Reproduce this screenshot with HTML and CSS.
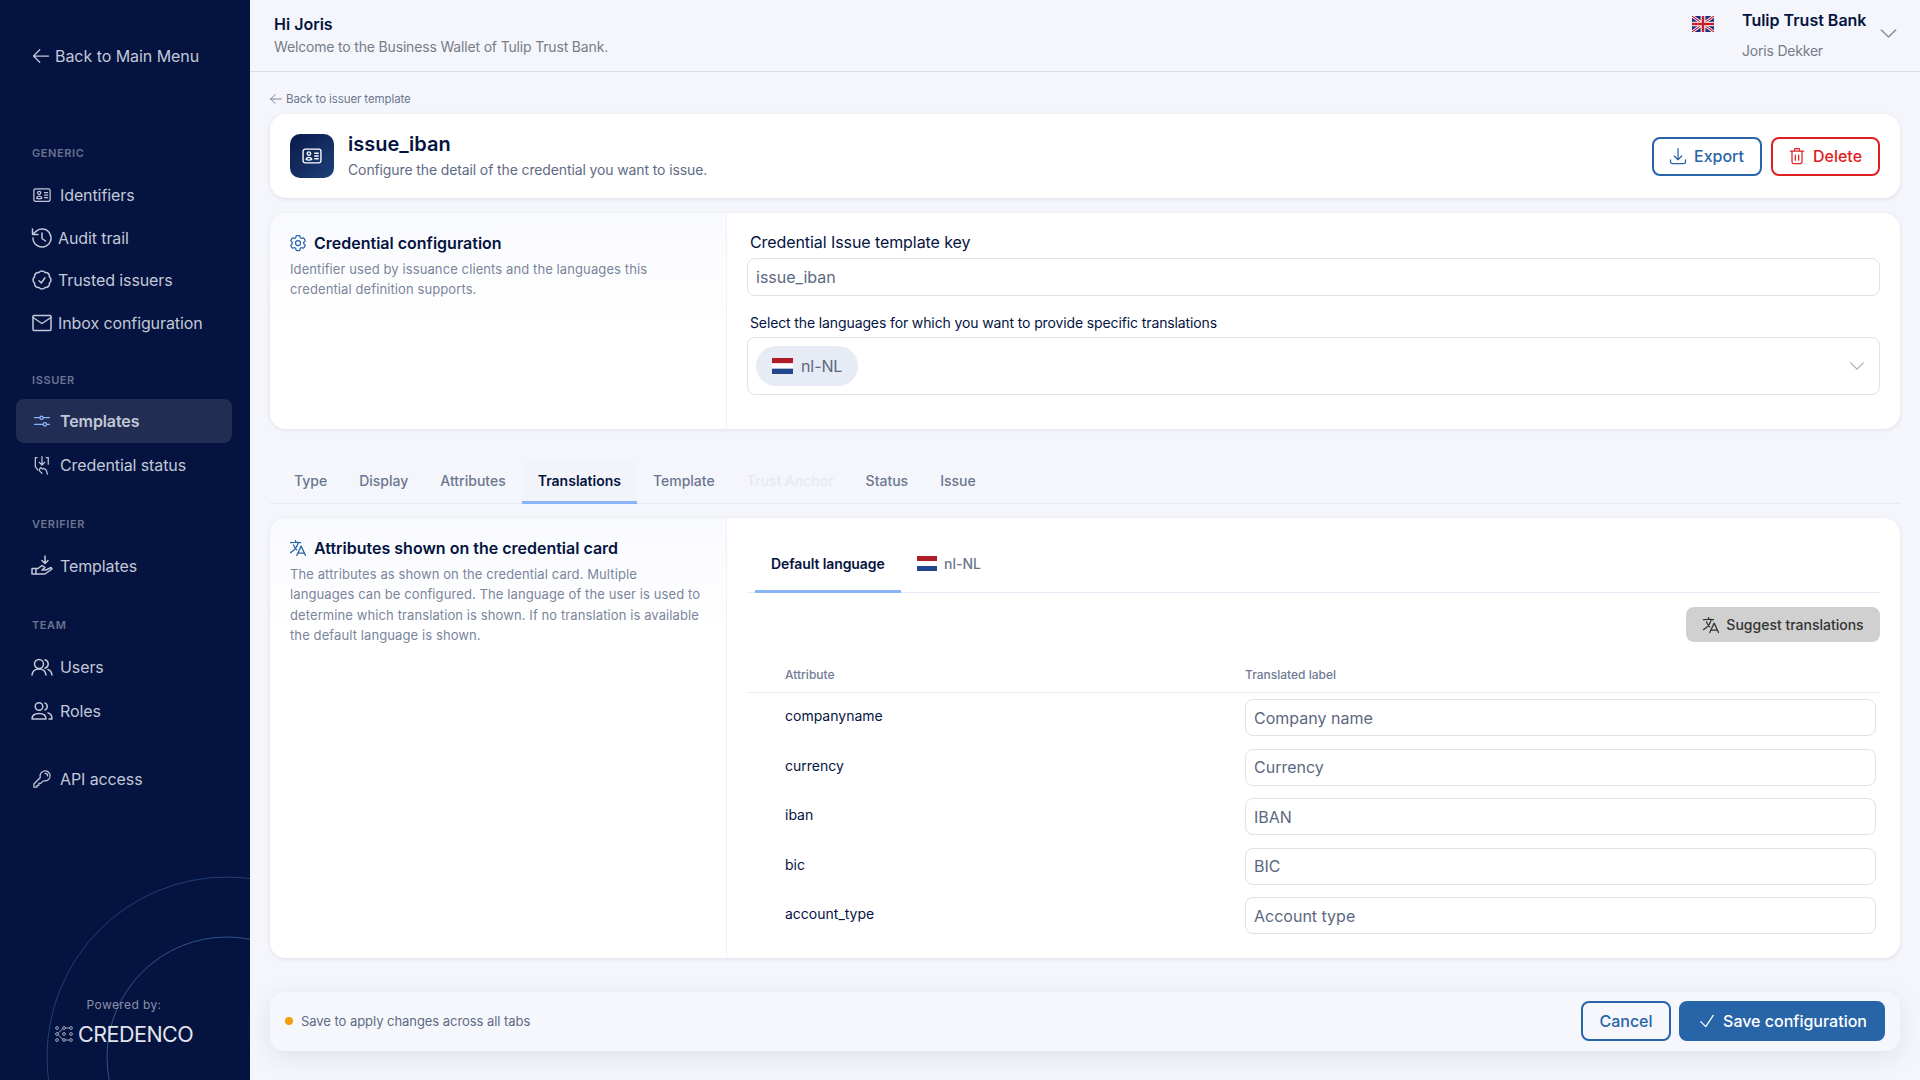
FILE: index.html
```html
<!DOCTYPE html>
<html lang="en">
<head>
    <meta charset="UTF-8">
    <meta name="viewport" content="width=device-width, initial-scale=1.0">
    <title>issue_iban</title>
    <link rel="stylesheet" href="styles.css">
</head>
<body>
    <svg class="sprite" aria-hidden="true">
        <defs>
            <symbol id="i_arrow" viewBox="0 0 24 24"><path d="M10.5 19.5 3 12m0 0 7.5-7.5M3 12h18"/></symbol>
            <symbol id="i_card" viewBox="0 0 24 24"><path d="M15 9h3.75M15 12h3.75M15 15h3.75M4.5 19.5h15a2.25 2.25 0 0 0 2.25-2.25V6.75A2.25 2.25 0 0 0 19.5 4.5h-15a2.25 2.25 0 0 0-2.25 2.25v10.5A2.25 2.25 0 0 0 4.5 19.5Zm6-10.125a1.875 1.875 0 1 1-3.75 0 1.875 1.875 0 0 1 3.75 0Zm1.294 6.336a6.721 6.721 0 0 1-3.17.789 6.721 6.721 0 0 1-3.168-.789 3.376 3.376 0 0 1 6.338 0Z"/></symbol>
            <symbol id="i_lang" viewBox="0 0 24 24"><path d="m10.5 21 5.25-11.25L21 21m-9-3h7.5M3 5.621a48.474 48.474 0 0 1 6-.371m0 0c1.12 0 2.233.038 3.334.114M9 5.25V3m3.334 2.364C11.176 10.658 7.69 15.08 3 17.502m9.334-12.138c.896.061 1.785.147 2.666.257m-4.589 8.495a18.023 18.023 0 0 1-3.827-5.802"/></symbol>
            <symbol id="i_chev" viewBox="0 0 24 24"><path d="m19.5 8.25-7.5 7.5-7.5-7.5"/></symbol>
            <symbol id="f_nl" viewBox="0 0 3 3" preserveAspectRatio="none"><rect width="3" height="1" fill="#ae1c28"/><rect y="1" width="3" height="1" fill="#fff"/><rect y="2" width="3" height="1" fill="#21468b"/></symbol>
        </defs>
    </svg>

    <div class="app">
        <aside class="sidebar">
            <svg class="side_rings" viewBox="0 0 250 210" aria-hidden="true">
                <circle class="ring_out" cx="227" cy="187" r="180"/>
                <circle class="ring_in" cx="227" cy="187" r="120"/>
            </svg>

            <a class="side_back"><svg class="ico ico_20"><use href="#i_arrow"/></svg>Back to Main Menu</a>

            <p class="side_label side_label_first">GENERIC</p>
            <a class="side_item side_item_sm"><svg class="ico ico_20"><use href="#i_card"/></svg>Identifiers</a>
            <a class="side_item side_item_sm side_tight">
                <svg class="ico ico_24" viewBox="0 0 24 24"><path d="M3 12a9 9 0 1 0 2.7-6.4L2.5 8.500M2.500 3v5.500H8M12 7v5.500l3.500 2.500"/></svg>Audit trail
            </a>
            <a class="side_item side_item_sm side_tight">
                <svg class="ico ico_24" viewBox="0 0 24 24"><path d="M9 12.75 11.25 15 15 9.75M21 12c0 1.268-.63 2.39-1.593 3.068a3.745 3.745 0 0 1-1.043 3.296 3.745 3.745 0 0 1-3.296 1.043A3.745 3.745 0 0 1 12 21c-1.268 0-2.39-.63-3.068-1.593a3.746 3.746 0 0 1-3.296-1.043 3.745 3.745 0 0 1-1.043-3.296A3.745 3.745 0 0 1 3 12c0-1.268.63-2.39 1.593-3.068a3.745 3.745 0 0 1 1.043-3.296 3.746 3.746 0 0 1 3.296-1.043A3.746 3.746 0 0 1 12 3c1.268 0 2.39.63 3.068 1.593a3.746 3.746 0 0 1 3.296 1.043 3.746 3.746 0 0 1 1.043 3.296A3.745 3.745 0 0 1 21 12Z"/></svg>Trusted issuers
            </a>
            <a class="side_item side_item_sm side_tight">
                <svg class="ico ico_20" viewBox="0 0 20 20"><rect x="1" y="2.500" width="18" height="15" rx="1"/><path d="M1 4.500l9 6 9-6"/></svg>Inbox configuration
            </a>

            <p class="side_label">ISSUER</p>
            <a class="side_item side_active">
                <svg class="ico ico_20" viewBox="0 0 24 24"><path d="M3 8h6.500M13.500 8H21M3 16h10.500M17.500 16H21"/><circle cx="11.500" cy="8" r="2"/><circle cx="15.500" cy="16" r="2"/></svg>Templates
            </a>
            <a class="side_item">
                <svg class="ico ico_20" viewBox="0 0 24 24"><path d="M6 3H4v11l3 4M12 2v10m-3.500-3.500L12 12l3.500-3.500M17 3h2.500v8M9 17l1.500-2 2.500 2 1-1 3 2 1.500 5M9 17v2l3 3"/></svg>Credential status
            </a>

            <p class="side_label">VERIFIER</p>
            <a class="side_item gap_one">
                <svg class="ico ico_24" viewBox="0 0 24 24"><path d="M15 2v7.500m-3-3 3 3 3-3M2 14.500h6l4-3 3 2-3 2.500h4l5-2.500 1 1.500-7 5H2zM6 14.500V20"/></svg>Templates
            </a>

            <p class="side_label">TEAM</p>
            <a class="side_item gap_one">
                <svg class="ico ico_24" viewBox="0 0 24 24"><circle cx="9" cy="9" r="4.500"/><path d="M2 20c.5-4 3-6 7-6s6.500 2 7 6M15 4.700a4.500 4.500 0 0 1 0 8.600M18 14.500c2 .8 3.600 2.800 4 5.500"/></svg>Users
            </a>
            <a class="side_item">
                <svg class="ico ico_24" viewBox="0 0 24 24"><circle cx="9" cy="7.500" r="3.800"/><path d="M15 4a3.800 3.800 0 0 1 0 7M2 20c0-3.500 2.500-5.500 7-5.500s7 2 7 5.500zM18 14c2.500.5 4 2.500 4 6h-3"/></svg>Roles
            </a>
            <a class="side_item side_api">
                <svg class="ico ico_20" viewBox="0 0 24 24"><path d="M15.750 5.250a3 3 0 0 1 3 3m3 0a6 6 0 0 1-7.029 5.912c-.563-.097-1.159.026-1.563.43L10.500 17.250H8.250v2.250H6v2.250H2.250v-2.818c0-.597.237-1.170.659-1.591l6.499-6.499c.404-.404.527-1 .43-1.563A6 6 0 1 1 21.750 8.250Z"/></svg>API access
            </a>

            <div class="side_foot">
                <p class="powered">Powered by:</p>
                <div class="brand">
                    <svg class="brand_ico" viewBox="0 0 18 16">
                        <circle cx="2" cy="2" r="1.400"/><circle cx="16" cy="2" r="1.400"/><circle cx="9" cy="2" r="1.400"/>
                        <circle cx="2" cy="8" r="1.400"/><circle cx="9" cy="8" r="1.400"/><circle cx="16" cy="8" r="1.400"/>
                        <circle cx="2" cy="14" r="1.400"/><circle cx="9" cy="14" r="1.400"/><circle cx="16" cy="14" r="1.400"/>
                        <path d="M3.200 7 7.800 2.800M10.400 2H14.600M3.200 9 7.800 13.200M10.400 14H14.600"/>
                    </svg>
                    <span>CREDENCO</span>
                </div>
            </div>
        </aside>

        <div class="main">
            <header class="topbar">
                <div>
                    <p class="hi">Hi Joris</p>
                    <p class="welcome">Welcome to the Business Wallet of Tulip Trust Bank.</p>
                </div>
                <div class="account">
                    <svg class="uk_flag" viewBox="0 0 60 44" preserveAspectRatio="none">
                        <rect width="60" height="44" fill="#1f2f78"/>
                        <path d="M0 0 60 44M60 0 0 44" stroke="#fff" stroke-width="8"/>
                        <path d="M0 0 60 44M60 0 0 44" stroke="#c8202f" stroke-width="3"/>
                        <path d="M30 0V44M0 22H60" stroke="#fff" stroke-width="13"/>
                        <path d="M30 0V44M0 22H60" stroke="#c8202f" stroke-width="7"/>
                    </svg>
                    <div class="account_txt">
                        <p class="bank">Tulip Trust Bank</p>
                        <p class="person">Joris Dekker</p>
                    </div>
                    <svg class="ico account_chev"><use href="#i_chev"/></svg>
                </div>
            </header>

            <div class="content">
                <a class="back_link"><svg class="ico ico_14"><use href="#i_arrow"/></svg>Back to issuer template</a>

                <section class="card title_card">
                    <div class="title_ico"><svg class="ico ico_22"><use href="#i_card"/></svg></div>
                    <div class="title_txt">
                        <h1>issue_iban</h1>
                        <p>Configure the detail of the credential you want to issue.</p>
                    </div>
                    <div class="title_btns">
                        <button class="btn btn_line">
                            <svg class="ico ico_20" viewBox="0 0 24 24"><path d="M3 16.500v2.250A2.250 2.250 0 0 0 5.250 21h13.500A2.250 2.250 0 0 0 21 18.750V16.500M16.500 12 12 16.500m0 0L7.500 12m4.500 4.500V3"/></svg>Export
                        </button>
                        <button class="btn btn_red">
                            <svg class="ico ico_20" viewBox="0 0 24 24"><path d="M4 6h16M9 6V4a1 1 0 0 1 1-1h4a1 1 0 0 1 1 1v2M6 6v13a2 2 0 0 0 2 2h8a2 2 0 0 0 2-2V6M10 11v6M14 11v6"/></svg>Delete
                        </button>
                    </div>
                </section>

                <section class="card split_card config_card">
                    <div class="split_left">
                        <h2>
                            <svg class="ico ico_20 blue_ico" viewBox="0 0 24 24"><path d="M9.594 3.940c.09-.542.56-.94 1.110-.94h2.593c.55 0 1.020.398 1.110.94l.213 1.281c.063.374.313.686.645.87.074.04.147.083.22.127.325.196.72.257 1.075.124l1.217-.456a1.125 1.125 0 0 1 1.370.49l1.296 2.247a1.125 1.125 0 0 1-.26 1.431l-1.003.827c-.293.241-.438.613-.43.992a7.723 7.723 0 0 1 0 .255c-.008.378.137.75.43.991l1.004.827c.424.35.534.955.26 1.430l-1.298 2.247a1.125 1.125 0 0 1-1.369.491l-1.217-.456c-.355-.133-.75-.072-1.076.124a6.470 6.470 0 0 1-.22.128c-.331.183-.581.495-.644.869l-.213 1.281c-.09.543-.56.94-1.110.94h-2.594c-.55 0-1.019-.398-1.110-.94l-.213-1.281c-.062-.374-.312-.686-.644-.87a6.520 6.520 0 0 1-.22-.127c-.325-.196-.72-.257-1.076-.124l-1.217.456a1.125 1.125 0 0 1-1.369-.49l-1.297-2.247a1.125 1.125 0 0 1 .26-1.431l1.004-.827c.292-.24.437-.613.43-.991a6.932 6.932 0 0 1 0-.255c.007-.38-.138-.751-.43-.992l-1.004-.827a1.125 1.125 0 0 1-.26-1.430l1.297-2.247a1.125 1.125 0 0 1 1.370-.491l1.216.456c.356.133.751.072 1.076-.124.072-.044.146-.086.22-.128.332-.183.582-.495.644-.869l.214-1.280Z"/><circle cx="12" cy="12" r="3"/></svg>
                            Credential configuration
                        </h2>
                        <p class="left_desc">Identifier used by issuance clients and the languages this<br>credential definition supports.</p>
                    </div>
                    <div class="split_right">
                        <label class="lbl_big">Credential Issue template key</label>
                        <input class="field field_key" type="text" value="issue_iban">
                        <label class="lbl_small">Select the languages for which you want to provide specific translations</label>
                        <div class="lang_select">
                            <span class="chip"><svg class="flag"><use href="#f_nl"/></svg>nl-NL</span>
                            <svg class="ico select_chev"><use href="#i_chev"/></svg>
                        </div>
                    </div>
                </section>

                <nav class="tabs">
                    <a class="tab">Type</a>
                    <a class="tab">Display</a>
                    <a class="tab">Attributes</a>
                    <a class="tab tab_on">Translations</a>
                    <a class="tab">Template</a>
                    <a class="tab tab_off">Trust Anchor</a>
                    <a class="tab">Status</a>
                    <a class="tab">Issue</a>
                </nav>

                <section class="card split_card attr_card">
                    <div class="split_left">
                        <h2><svg class="ico ico_20 blue_ico"><use href="#i_lang"/></svg>Attributes shown on the credential card</h2>
                        <p class="left_desc">The attributes as shown on the credential card. Multiple<br>languages can be configured. The language of the user is used to<br>determine which translation is shown. If no translation is available<br>the default language is shown.</p>
                    </div>
                    <div class="split_right split_right_tr">
                        <div class="subtabs">
                            <a class="subtab subtab_on">Default language</a>
                            <a class="subtab subtab_nl"><svg class="flag flag_sm"><use href="#f_nl"/></svg>nl-NL</a>
                        </div>
                        <div class="suggest_row">
                            <button class="btn_suggest"><svg class="ico ico_20"><use href="#i_lang"/></svg>Suggest translations</button>
                        </div>
                        <div class="attr_head">
                            <span>Attribute</span>
                            <span>Translated label</span>
                        </div>
                        <div class="attr_row"><span class="attr_name">companyname</span><input class="field" type="text" value="Company name"></div>
                        <div class="attr_row"><span class="attr_name">currency</span><input class="field" type="text" value="Currency"></div>
                        <div class="attr_row"><span class="attr_name">iban</span><input class="field" type="text" value="IBAN"></div>
                        <div class="attr_row"><span class="attr_name">bic</span><input class="field" type="text" value="BIC"></div>
                        <div class="attr_row"><span class="attr_name">account_type</span><input class="field" type="text" value="Account type"></div>
                    </div>
                </section>

                <div class="savebar">
                    <span class="dot"></span>
                    <span class="save_msg">Save to apply changes across all tabs</span>
                    <button class="btn btn_line btn_cancel">Cancel</button>
                    <button class="btn btn_solid"><svg class="ico ico_20" viewBox="0 0 24 24"><path d="m4.500 12.750 6 6 9-13.500"/></svg>Save configuration</button>
                </div>
            </div>
        </div>
    </div>
</body>
</html>
```

FILE: styles.css
```css
*{
    padding: 0;
    margin: 0;
    box-sizing: border-box;
}
html, body{
    height: 100%;
}
body{
    font-family: "Inter", "Liberation Sans", sans-serif;
    color: #04133f;
    background-color: #f5f6fb;
    overflow: hidden;
}
.sprite{
    display: none;
}
.ico{
    fill: none;
    stroke: currentColor;
    stroke-width: 1.5;
    stroke-linecap: round;
    stroke-linejoin: round;
    flex-shrink: 0;
}
.ico_14{ width: 14px; height: 14px; }
.ico_20{ width: 20px; height: 20px; }
.ico_22{ width: 22px; height: 22px; }
.ico_24{ width: 24px; height: 24px; margin: 0 -2px; }
.app{
    display: flex;
    height: 100vh;
}

/* sidebar */
.sidebar{
    position: relative;
    display: flex;
    flex-direction: column;
    width: 250px;
    flex-shrink: 0;
    padding: 44px 18px 0 32px;
    background-color: #04133f;
    color: #c3c8d8;
    overflow: hidden;
}
.side_rings{
    position: absolute;
    left: 0;
    bottom: 0;
    width: 250px;
    height: 210px;
    fill: none;
    stroke-width: 1;
}
.ring_out{
    stroke: #223f78;
}
.ring_in{
    stroke: #2f5590;
}
.side_back{
    display: flex;
    align-items: center;
    gap: 4px;
    height: 24px;
    font-size: 16px;
    letter-spacing: -0.05px;
}
.side_back .ico{
    margin-left: -1px;
}
.side_label{
    margin-top: 30px;
    margin-bottom: 12px;
    height: 14px;
    font-size: 11px;
    line-height: 14px;
    font-weight: 600;
    letter-spacing: 0.6px;
    color: #6b7391;
}
.side_label_first{
    margin-top: 78px;
    margin-bottom: 14px;
}
.side_item_sm + .side_label{
    margin-top: 29px;
}
.side_item{
    display: flex;
    align-items: center;
    gap: 8px;
    height: 44px;
    margin-left: -16px;
    padding-left: 16px;
    border-radius: 8px;
    font-size: 16px;
    letter-spacing: -0.1px;
}
.side_item_sm{
    height: 42.5px;
}
.side_tight{
    gap: 6px;
}
.gap_one{
    margin-top: 1px;
}
.side_active{
    background-color: #212d52;
    font-weight: 600;
}
.side_active .ico{
    color: #8ab4f8;
}
.side_api{
    margin-top: 24px;
}
.side_foot{
    position: relative;
    margin-top: auto;
    padding-bottom: 32px;
    margin-left: 23px;
}
.powered{
    width: 138px;
    text-align: center;
    font-size: 12px;
    line-height: 16px;
    letter-spacing: 0.4px;
    color: #8b91a8;
}
.brand{
    display: flex;
    align-items: center;
    gap: 5px;
    margin-top: 7px;
    font-size: 21.5px;
    line-height: 28px;
    letter-spacing: -0.5px;
    color: #e1e4ec;
}
.brand_ico{
    width: 18px;
    height: 16px;
    fill: none;
    stroke: #c3c8d8;
    stroke-width: 0.8;
}

/* main */
.main{
    flex: 1;
    display: flex;
    flex-direction: column;
    min-width: 0;
}
.topbar{
    display: flex;
    justify-content: space-between;
    height: 72px;
    padding: 14px 20px 0 24px;
    border-bottom: 1px solid #dcdee6;
}
.hi{
    font-size: 16px;
    line-height: 20px;
    font-weight: 600;
}
.welcome{
    margin-top: 3px;
    font-size: 14px;
    line-height: 20px;
    letter-spacing: -0.17px;
    color: #777c88;
}
.account{
    display: flex;
    align-items: flex-start;
}
.uk_flag{
    width: 22px;
    height: 16px;
    margin-top: 2px;
    margin-right: 28px;
}
.account_txt{
    width: 135px;
    margin-top: -4px;
}
.bank{
    font-size: 16px;
    line-height: 20px;
    font-weight: 600;
}
.person{
    margin-top: 11px;
    font-size: 14px;
    line-height: 20px;
    letter-spacing: -0.2px;
    color: #777c88;
}
.account_chev{
    width: 23px;
    height: 23px;
    margin-top: 8px;
    color: #8a8d96;
}
.content{
    flex: 1;
    display: flex;
    flex-direction: column;
    padding: 0 20px;
}
.back_link{
    display: flex;
    align-items: center;
    gap: 3px;
    margin-top: 18px;
    margin-bottom: 6px;
    height: 18px;
    font-size: 11.5px;
    letter-spacing: -0.1px;
    color: #6b7790;
}
.back_link .ico{
    margin-left: -1px;
}
.card{
    background-color: #fff;
    border-radius: 16px;
    box-shadow: 0 1px 4px rgba(20,30,70,0.1);
}

/* title card */
.title_card{
    display: flex;
    align-items: center;
    height: 84px;
    padding: 0 20px;
}
.title_ico{
    display: flex;
    justify-content: center;
    align-items: center;
    width: 44px;
    height: 44px;
    border-radius: 10px;
    background: linear-gradient(135deg, #0a1a4a, #1d3f78);
    color: #fff;
}
.title_txt{
    flex: 1;
    margin-left: 14px;
    margin-top: -2px;
}
h1{
    font-size: 20px;
    line-height: 26px;
    font-weight: 600;
}
.title_txt p{
    margin-top: 3px;
    font-size: 14px;
    line-height: 20px;
    letter-spacing: -0.12px;
    color: #5f6b85;
}
.title_btns{
    display: flex;
    gap: 9px;
}
.btn{
    display: inline-flex;
    justify-content: center;
    align-items: center;
    gap: 6px;
    height: 39px;
    border-radius: 8px;
    border: 2px solid #2864a8;
    background-color: transparent;
    font-family: inherit;
    font-size: 16px;
    font-weight: 500;
    color: #2864a8;
}
.btn_line{
    width: 110px;
    padding-right: 2px;
}
.btn_red{
    width: 109px;
    padding-right: 2px;
    border-color: #e02020;
    color: #e02020;
}
.btn_cancel{
    width: 90px;
    height: 40px;
    margin-left: auto;
    padding-right: 0;
}
.btn_solid{
    width: 206px;
    height: 40px;
    margin-left: 8px;
    background-color: #2864a8;
    color: #fff;
}

/* two column cards */
.split_card{
    display: flex;
    overflow: hidden;
}
.config_card{
    height: 216px;
    margin-top: 15px;
}
.attr_card{
    height: 440px;
    margin-top: 14px;
}
.split_left{
    width: 457px;
    flex-shrink: 0;
    padding: 19px 20px 0;
    border-right: 1px solid #f0f2f7;
    background: linear-gradient(180deg, #f9fafe, #fff 110px);
}
h2{
    display: flex;
    align-items: center;
    gap: 6px;
    font-size: 16px;
    line-height: 22px;
    font-weight: 600;
}
h2 .ico{
    margin-left: -2px;
}
.blue_ico{
    color: #2864a8;
}
.left_desc{
    margin-top: 5px;
    font-size: 13px;
    line-height: 20.3px;
    letter-spacing: 0.1px;
    color: #7a859c;
}
.split_right{
    flex: 1;
    padding: 19px 20px 0;
    min-width: 0;
}
.split_right_tr{
    padding-top: 0;
}
.lbl_big{
    display: block;
    padding-left: 3px;
    font-size: 16px;
    line-height: 20px;
    letter-spacing: -0.08px;
}
.lbl_small{
    display: block;
    margin-top: 17px;
    margin-bottom: 4px;
    padding-left: 3px;
    font-size: 14px;
    line-height: 20px;
    letter-spacing: -0.12px;
}
.field{
    display: block;
    width: 100%;
    height: 37px;
    padding: 0 8px;
    border: 1px solid #dfe1e6;
    border-radius: 8px;
    background-color: #fff;
    font-family: inherit;
    font-size: 16px;
    color: #5c6880;
}
.field_key{
    height: 38px;
    margin-top: 6px;
}
.lang_select{
    display: flex;
    justify-content: space-between;
    align-items: center;
    height: 58px;
    padding: 0 12px 0 8px;
    border: 1px solid #dfe1e6;
    border-radius: 8px;
}
.chip{
    display: flex;
    align-items: center;
    gap: 8px;
    width: 102px;
    height: 40px;
    padding-left: 16px;
    border-radius: 20px;
    background-color: #e6ebf5;
    font-size: 16px;
    letter-spacing: -0.1px;
    color: #5c6880;
}
.flag{
    width: 21px;
    height: 16px;
}
.flag_sm{
    width: 20px;
    height: 15px;
}
.select_chev{
    width: 20px;
    height: 20px;
    color: #a9afbd;
}

/* tabs */
.tabs{
    display: flex;
    height: 44px;
    margin-top: 31px;
    padding-left: 8px;
    border-bottom: 1px solid #e6e9f3;
}
.tab{
    display: flex;
    align-items: center;
    height: 44px;
    padding: 0 16px 4px;
    font-size: 14px;
    font-weight: 500;
    color: #6b7790;
}
.tab_on{
    border-bottom: 3px solid #8ab4f8;
    padding-bottom: 1px;
    background-color: #f3f4fa;
    color: #04133f;
    font-weight: 600;
}
.tab_off{
    color: #e7e9ef;
}
.subtabs{
    display: flex;
    height: 75px;
    border-bottom: 1px solid #e6ebf7;
}
.subtab{
    display: flex;
    align-items: center;
    gap: 7px;
    height: 75px;
    padding: 35px 16px 20px;
    font-size: 14px;
    font-weight: 500;
    color: #6b7790;
}
.subtab_on{
    margin-left: 8px;
    padding: 35px 0 17px 16px;
    width: 146px;
    white-space: nowrap;
    border-bottom: 3px solid #8ab4f8;
    letter-spacing: -0.1px;
    color: #04133f;
    font-weight: 600;
}
.suggest_row{
    display: flex;
    justify-content: flex-end;
    margin-top: 14px;
}
.btn_suggest{
    display: flex;
    align-items: center;
    justify-content: center;
    gap: 5px;
    width: 194px;
    height: 35px;
    padding-right: 1px;
    border: none;
    border-radius: 8px;
    background-color: #d0d0d0;
    font-family: inherit;
    font-size: 14px;
    font-weight: 500;
    color: #333;
}
.attr_head{
    display: grid;
    grid-template-columns: 498px 1fr;
    align-items: end;
    height: 51px;
    padding-bottom: 9px;
    border-bottom: 1px solid #e6ebf7;
    font-size: 12px;
    line-height: 16px;
    font-weight: 500;
    color: #6f7b92;
}
.attr_head span:first-child{
    padding-left: 38px;
}
.attr_row{
    display: grid;
    grid-template-columns: 498px 1fr;
    height: 49.5px;
    padding: 6px 4px 0 0;
}
.attr_name{
    padding: 7px 0 0 38px;
    font-size: 14px;
    line-height: 20px;
}

/* save bar */
.savebar{
    display: flex;
    align-items: center;
    height: 59px;
    margin-top: 34px;
    padding: 0 15px 1px;
    border-radius: 14px;
    background-color: #f5f7fc;
    box-shadow: 0 6px 24px rgba(20,30,70,0.09);
}
.dot{
    width: 8px;
    height: 8px;
    border-radius: 50%;
    background-color: #f59e0b;
}
.save_msg{
    margin-left: 8px;
    font-size: 13px;
    letter-spacing: -0.05px;
    color: #5f6b85;
}
```
